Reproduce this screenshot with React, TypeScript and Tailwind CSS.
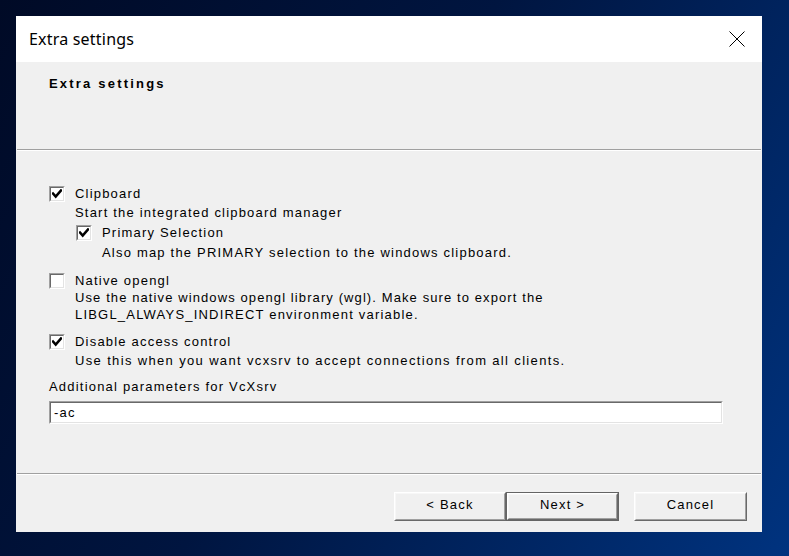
import React from "react";

const ui = "font-['Liberation_Sans',Arial,sans-serif] text-[13px] tracking-[1.2px] text-black";

function Check({ checked }: { checked: boolean }) {
  return (
    <div className="w-[16px] h-[16px] shrink-0 border border-t-[#a0a0a0] border-l-[#a0a0a0] border-r-white border-b-white">
      <div className="w-full h-full border border-t-[#696969] border-l-[#696969] border-r-[#e3e3e3] border-b-[#e3e3e3] bg-white flex items-center justify-center">
        {checked && (
          <svg width="10" height="10" viewBox="0 0 10 10">
            <polyline points="1,4.5 3.7,7.5 9,1.5" fill="none" stroke="#000" strokeWidth="2.6" strokeLinecap="square" />
          </svg>
        )}
      </div>
    </div>
  );
}

function CheckRow({ checked, label, className }: { checked: boolean; label: string; className: string }) {
  return (
    <div className={`flex items-center h-[16px] gap-[10px] ${className}`}>
      <Check checked={checked} />
      <span className="leading-[16px] whitespace-nowrap">{label}</span>
    </div>
  );
}

function Line({ text, className }: { text: string; className: string }) {
  return <div className={`h-[16px] leading-[16px] whitespace-nowrap ${className}`}>{text}</div>;
}

function Btn({ label, def, className }: { label: string; def?: boolean; className: string }) {
  const inner = (
    <div className="w-full h-full border border-t-white border-l-white border-r-[#696969] border-b-[#696969]">
      <div className="w-full h-full border border-t-[#f7f7f7] border-l-[#f7f7f7] border-r-[#a0a0a0] border-b-[#a0a0a0] bg-[#f0f0f0] flex items-center justify-center leading-[16px] pb-[4px]">
        {label}
      </div>
    </div>
  );
  return (
    <div className={`h-[29px] ${def ? "border border-[#646464]" : ""} ${className}`}>{inner}</div>
  );
}

export default function App() {
  return (
    <div className="w-[789px] h-[556px] pt-[16px] pl-[16px] bg-[linear-gradient(120deg,#000a26_0%,#001540_45%,#00337f_100%)] overflow-hidden">
      <div className={`w-[746px] h-[516px] bg-[#f0f0f0] flex flex-col ${ui}`}>
        {/* title bar */}
        <div className="h-[46px] bg-white flex items-center justify-between pl-[13px] pr-[17px]">
          <span className="font-['Noto_Sans',sans-serif] text-[16px] tracking-[0.2px] leading-[20px] mt-[-1px]">Extra settings</span>
          <svg width="16" height="16" viewBox="0 0 16 16">
            <path d="M0.5 0.5 L15.5 15.5 M15.5 0.5 L0.5 15.5" stroke="#000" strokeWidth="1" />
          </svg>
        </div>
        {/* header */}
        <div className="h-[87px] pl-[33px] pt-[14px]">
          <div className="font-bold tracking-[2.2px] leading-[16px]">Extra settings</div>
        </div>
        <div className="mx-[1px] h-[2px] border-t border-t-[#a0a0a0] border-b border-b-white" />
        {/* body */}
        <div className="flex flex-col pl-[33px] pr-[39px]">
          <CheckRow checked label="Clipboard" className="mt-[35px]" />
          <Line text="Start the integrated clipboard manager" className="mt-[3px] pl-[26px]" />
          <CheckRow checked label="Primary Selection" className="mt-[4px] pl-[27px]" />
          <Line text="Also map the PRIMARY selection to the windows clipboard." className="mt-[4px] pl-[53px]" />
          <CheckRow checked={false} label="Native opengl" className="mt-[12px]" />
          <Line text="Use the native windows opengl library (wgl). Make sure to export the" className="mt-[1px] pl-[26px] tracking-[1.1px]" />
          <Line text="LIBGL_ALWAYS_INDIRECT environment variable." className="mt-[1px] pl-[26px]" />
          <CheckRow checked label="Disable access control" className="mt-[11px]" />
          <Line text="Use this when you want vcxsrv to accept connections from all clients." className="mt-[3px] pl-[26px] tracking-[1.35px]" />
          <Line text="Additional parameters for VcXsrv" className="mt-[10px]" />
          <div className="mt-[6px] h-[23px] border border-t-[#a0a0a0] border-l-[#a0a0a0] border-r-white border-b-white">
            <div className="w-full h-full border border-t-[#696969] border-l-[#696969] border-r-[#e3e3e3] border-b-[#e3e3e3] bg-white flex items-center pl-[3px] leading-[16px]">
              -ac
            </div>
          </div>
        </div>
        <div className="mt-[49px] mx-[1px] h-[2px] border-t border-t-[#a0a0a0] border-b border-b-white" />
        <div className="mt-[17px] flex justify-end pr-[15px]">
          <Btn label="< Back" className="w-[112px]" />
          <Btn label="Next >" def className="w-[113px]" />
          <Btn label="Cancel" className="w-[113px] ml-[15px]" />
        </div>
      </div>
    </div>
  );
}
